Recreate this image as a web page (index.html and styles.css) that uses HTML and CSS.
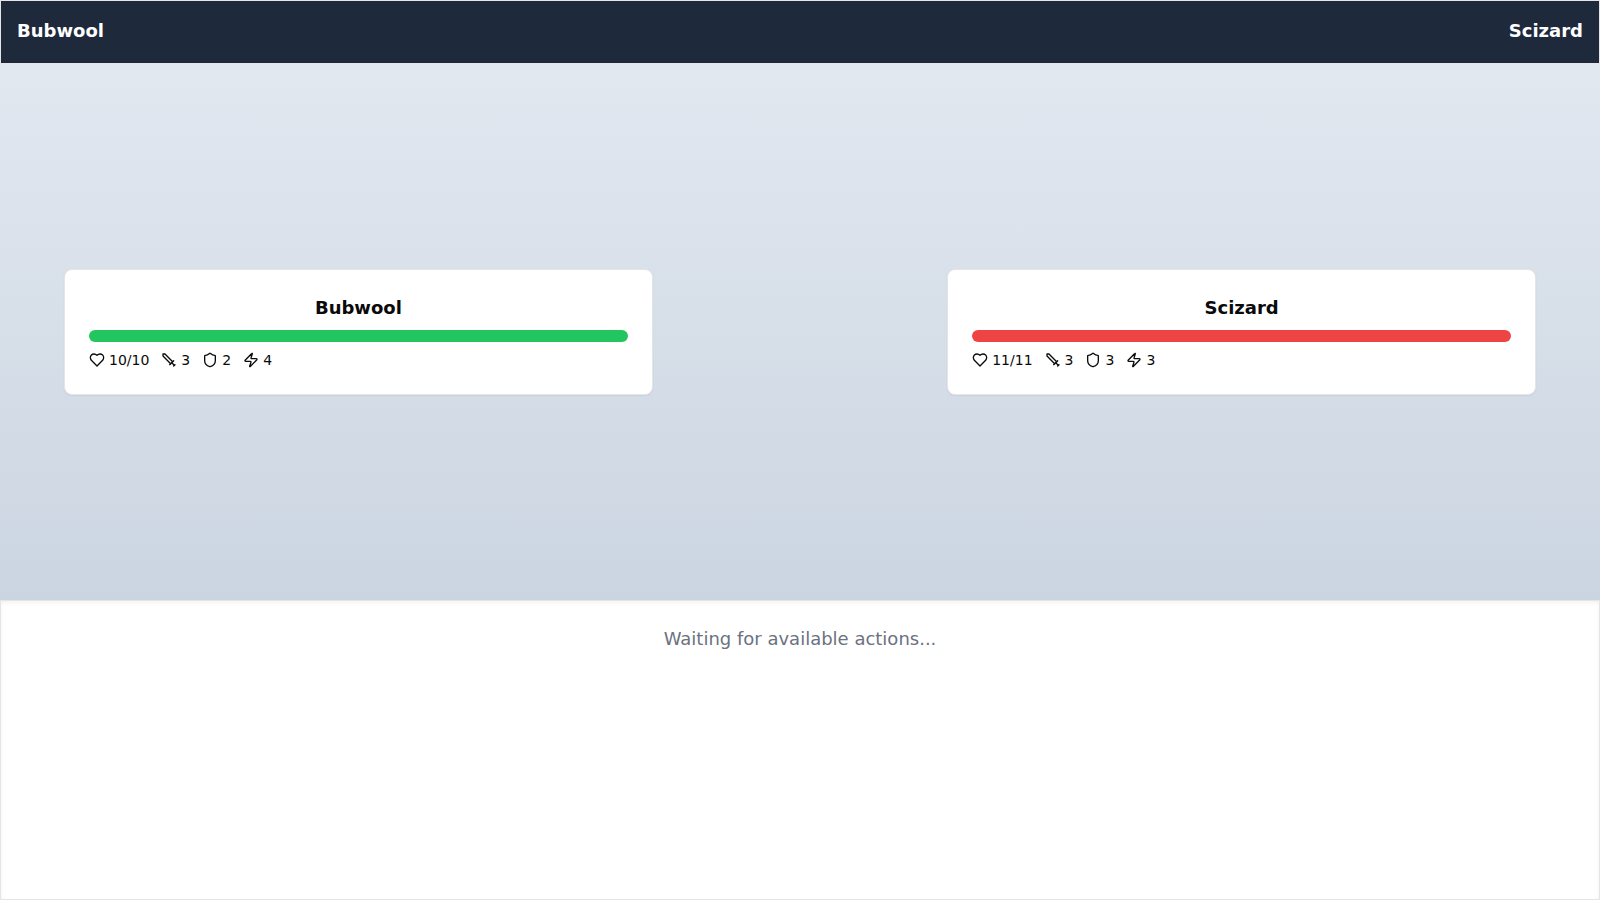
FILE: index.html
```html
<!DOCTYPE html>
<html lang="en">
<head>
<meta charset="utf-8">
<meta name="viewport" content="width=device-width, initial-scale=1">
<title>Battle</title>
<link rel="stylesheet" href="styles.css">
</head>
<body>
<div class="battle">
  <header class="topbar">
    <span>Bubwool</span>
    <span>Scizard</span>
  </header>
  <main class="arena">
    <section class="card">
      <h2 class="name">Bubwool</h2>
      <div class="health health-player"></div>
      <ul class="stats">
        <li class="stat"><svg class="icon" viewBox="0 0 24 24" aria-hidden="true"><path d="M19 14c1.490-1.460 3-3.210 3-5.500A5.500 5.500 0 0 0 16.500 3c-1.760 0-3 .5-4.500 2-1.500-1.500-2.740-2-4.500-2A5.500 5.500 0 0 0 2 8.500c0 2.300 1.500 4.050 3 5.500l7 7Z"/></svg><span>10/10</span></li>
        <li class="stat"><svg class="icon" viewBox="0 0 24 24" aria-hidden="true"><polyline points="14.5 17.5 3 6 3 3 6 3 17.5 14.5"/><line x1="13" x2="19" y1="19" y2="13"/><line x1="16" x2="20" y1="16" y2="20"/><line x1="19" x2="21" y1="21" y2="19"/></svg><span>3</span></li>
        <li class="stat"><svg class="icon" viewBox="0 0 24 24" aria-hidden="true"><path d="M20 13c0 5-3.500 7.500-7.660 8.950a1 1 0 0 1-.67-.01C7.500 20.500 4 18 4 13V6a1 1 0 0 1 1-1c2 0 4.500-1.200 6.240-2.720a1.170 1.170 0 0 1 1.520 0C14.510 3.810 17 5 19 5a1 1 0 0 1 1 1z"/></svg><span>2</span></li>
        <li class="stat"><svg class="icon" viewBox="0 0 24 24" aria-hidden="true"><path d="M4 14a1 1 0 0 1-.78-1.630l9.900-10.200a.5.5 0 0 1 .86.460l-1.920 6.020A1 1 0 0 0 13 10h7a1 1 0 0 1 .78 1.630l-9.900 10.200a.5.5 0 0 1-.86-.460l1.920-6.020A1 1 0 0 0 11 14z"/></svg><span>4</span></li>
      </ul>
    </section>
    <section class="card">
      <h2 class="name">Scizard</h2>
      <div class="health health-opponent"></div>
      <ul class="stats">
        <li class="stat"><svg class="icon" viewBox="0 0 24 24" aria-hidden="true"><path d="M19 14c1.490-1.460 3-3.210 3-5.500A5.500 5.500 0 0 0 16.500 3c-1.760 0-3 .5-4.500 2-1.500-1.500-2.740-2-4.500-2A5.500 5.500 0 0 0 2 8.500c0 2.300 1.500 4.050 3 5.500l7 7Z"/></svg><span>11/11</span></li>
        <li class="stat"><svg class="icon" viewBox="0 0 24 24" aria-hidden="true"><polyline points="14.5 17.5 3 6 3 3 6 3 17.5 14.5"/><line x1="13" x2="19" y1="19" y2="13"/><line x1="16" x2="20" y1="16" y2="20"/><line x1="19" x2="21" y1="21" y2="19"/></svg><span>3</span></li>
        <li class="stat"><svg class="icon" viewBox="0 0 24 24" aria-hidden="true"><path d="M20 13c0 5-3.500 7.500-7.660 8.950a1 1 0 0 1-.67-.01C7.500 20.500 4 18 4 13V6a1 1 0 0 1 1-1c2 0 4.500-1.200 6.240-2.720a1.170 1.170 0 0 1 1.520 0C14.510 3.810 17 5 19 5a1 1 0 0 1 1 1z"/></svg><span>3</span></li>
        <li class="stat"><svg class="icon" viewBox="0 0 24 24" aria-hidden="true"><path d="M4 14a1 1 0 0 1-.78-1.630l9.900-10.200a.5.5 0 0 1 .86.460l-1.920 6.020A1 1 0 0 0 13 10h7a1 1 0 0 1 .78 1.630l-9.900 10.200a.5.5 0 0 1-.86-.460l1.920-6.020A1 1 0 0 0 11 14z"/></svg><span>3</span></li>
      </ul>
    </section>
  </main>
  <footer class="actions">
    <p class="waiting">Waiting for available actions...</p>
  </footer>
</div>
</body>
</html>
```
FILE: styles.css
```css
* {
  box-sizing: border-box;
  margin: 0;
  padding: 0;
}

body {
  font-family: "DejaVu Sans", sans-serif;
  color: #0a0a0a;
}

.battle {
  display: grid;
  grid-template-rows: 64px 1fr calc(100vh / 3);
  min-height: 100vh;
  background: #cbd5e1;
}

.topbar {
  display: flex;
  justify-content: space-between;
  align-items: flex-start;
  padding: 16px;
  border: 1px solid #e5e5e5;
  background: #1e293b;
  color: #fff;
  font-size: 18px;
  font-weight: 700;
  line-height: 28px;
}

.arena {
  display: flex;
  justify-content: space-between;
  align-items: center;
  padding: 32px 64px;
  background: linear-gradient(to bottom, #e2e8f0, #cbd5e1);
}

.card {
  width: 40%;
  padding: 24px;
  border: 1px solid #e5e5e5;
  border-radius: 8px;
  background: #fff;
  box-shadow: 0 1px 2px rgb(0 0 0 / 0.05);
}

.name {
  margin-bottom: 8px;
  font-size: 18px;
  font-weight: 700;
  line-height: 28px;
  text-align: center;
}

.health {
  height: 12px;
  margin-bottom: 8px;
  border-radius: 6px;
}

.health-player {
  background: #22c55e;
}

.health-opponent {
  background: #ef4444;
}

.stats {
  display: flex;
  gap: 12px;
  list-style: none;
  font-size: 14px;
  line-height: 20px;
}

.stat {
  display: flex;
  align-items: center;
  gap: 4px;
}

.icon {
  width: 16px;
  height: 16px;
  fill: none;
  stroke: currentColor;
  stroke-width: 2;
  stroke-linecap: round;
  stroke-linejoin: round;
}

.actions {
  padding: 24px;
  border: 1px solid #e5e5e5;
  background: #fff;
  box-shadow: inset 0 2px 4px rgb(0 0 0 / 0.05);
}

.waiting {
  color: #6b7280;
  font-size: 18px;
  line-height: 28px;
  text-align: center;
}
```
